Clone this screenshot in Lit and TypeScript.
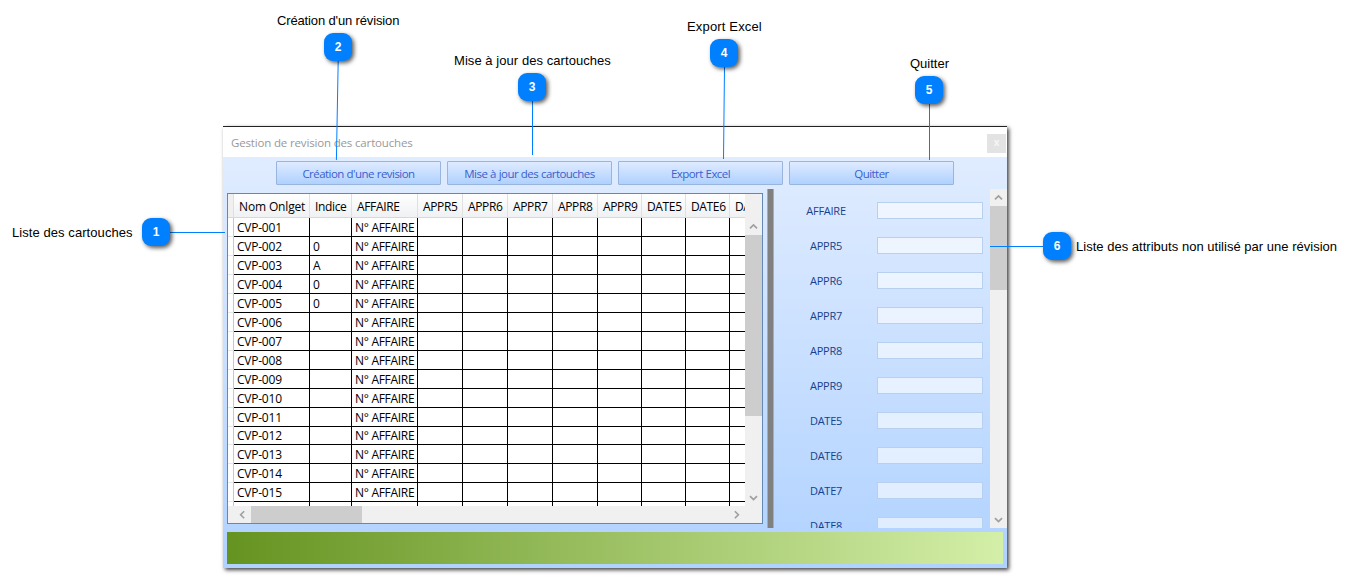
import { LitElement, html, svg, css } from "lit";
import { customElement, property } from "lit/decorators.js";

const COLUMNS = ["Nom Onlget", "Indice", "AFFAIRE", "APPR5", "APPR6", "APPR7", "APPR8", "APPR9", "DATE5", "DATE6", "DATE7"];
const INDICES: Record<number, string> = { 2: "0", 3: "A", 4: "0", 5: "0" };
const ROWS = Array.from({ length: 15 }, (_, i) => ({
  name: "CVP-" + String(i + 1).padStart(3, "0"),
  indice: INDICES[i + 1] ?? "",
}));
const ATTRIBUTES = ["AFFAIRE", "APPR5", "APPR6", "APPR7", "APPR8", "APPR9", "DATE5", "DATE6", "DATE7", "DATE8"];

const CALLOUTS = [
  { n: 1, text: "Liste des cartouches", x: 142, y: 218, tx: 12, ty: 225, ls: 0.07, line: [170, 232.5, 225, 232.5] },
  { n: 2, text: "Création d'un révision", x: 324, y: 33, tx: 277, ty: 13, ls: -0.14, line: [338.2, 61, 336.4, 160] },
  { n: 3, text: "Mise à jour des cartouches", x: 518, y: 73, tx: 454, ty: 53, ls: 0.06, line: [532.5, 101, 532.5, 155] },
  { n: 4, text: "Export Excel", x: 710, y: 39, tx: 687, ty: 19, ls: 0.16, line: [724.5, 67, 723.5, 159] },
  { n: 5, text: "Quitter", x: 915, y: 76, tx: 910, ty: 56, ls: 0, line: [929.5, 104, 929.5, 160] },
  { n: 6, text: "Liste des attributs non utilisé par une révision", x: 1043, y: 232, tx: 1076, ty: 239, ls: 0.02, line: [990, 246.5, 1043, 246.5] },
];

@customElement("scroll-arrow")
export class ScrollArrow extends LitElement {
  @property() dir = "up";
  static styles = css`
    :host { display: block; width: 17px; height: 17px; flex: none; }
    svg { display: block; }
  `;
  render() {
    const turn = { up: 0, right: 90, down: 180, left: 270 }[this.dir] ?? 0;
    return html`<svg width="17" height="17" viewBox="0 0 17 17">
      <path d="M5 10.4 L8.5 6.9 L12 10.4" fill="none" stroke="#a0a0a0" stroke-width="1.7" transform="rotate(${turn} 8.5 8.75)"/>
    </svg>`;
  }
}

@customElement("cartouche-grid")
export class CartoucheGrid extends LitElement {
  static styles = css`
    :host {
      display: grid; box-sizing: border-box; width: 536px; height: 331px;
      grid-template: 24px 288px 17px / 517px 17px;
      border: 1px solid #6289b5; background: #f0f0f0; color: #000;
      font: 12px/18px "Open Sans", "Noto Sans", sans-serif;
    }
    .head, .row { display: grid; grid-template-columns: 6px 76px 42px 66px 45px 45px 45px 45px 44px 44px 44px 44px; white-space: nowrap; }
    .head { overflow: hidden; background: linear-gradient(#fff, #f0f1f3); border-bottom: 1px solid #d8d8d8; height: 23px; }
    .head span { padding: 4px 0 0 5px; border-right: 1px solid #e0e0e0; letter-spacing: -0.35px; }
    .head .first { letter-spacing: -0.15px; }
    .head .corner { padding: 0; background: #f0f0f0; }
    .body { overflow: hidden; background: #fff; }
    .row { height: 19px; }
    .row:nth-child(12) { height: 18px; }
    .row span { border-right: 1px solid #000; border-bottom: 1px solid #000; padding-left: 3px; letter-spacing: -0.23px; line-height: 19px; overflow: hidden; }
    .row:nth-child(12) span { line-height: 18px; }
    .row .affaire { letter-spacing: -0.3px; }
    .row .mark { padding: 0; border-right-color: #c8c8c8; border-bottom-color: #e8e8e8; }
    .v { display: flex; flex-direction: column; justify-content: space-between; }
    .vt { height: 181px; background: #cdcdcd; }
    .h { display: flex; }
    .ht { width: 111px; background: #cdcdcd; margin-right: 366px; }
    .pad { width: 6px; }
  `;
  render() {
    return html`
      <div class="head"><span class="corner"></span>${COLUMNS.map((c, i) => html`<span class=${i ? "" : "first"}>${c}</span>`)}</div>
      <div></div>
      <div class="body">
        ${ROWS.map((r) => html`<div class="row"><span class="mark"></span><span>${r.name}</span><span>${r.indice}</span><span class="affaire">N° AFFAIRE</span>${COLUMNS.slice(3).map(() => html`<span></span>`)}</div>`)}
        <div class="row"><span class="mark"></span>${COLUMNS.map(() => html`<span></span>`)}</div>
      </div>
      <div class="v"><div><scroll-arrow dir="up"></scroll-arrow><div class="vt"></div></div><scroll-arrow dir="down"></scroll-arrow></div>
      <div class="h"><div class="pad"></div><scroll-arrow dir="left"></scroll-arrow><div class="ht"></div><scroll-arrow dir="right"></scroll-arrow></div>
    `;
  }
}

@customElement("attribute-panel")
export class AttributePanel extends LitElement {
  static styles = css`
    :host { display: flex; width: 233px; height: 339px; }
    .list { flex: 1; overflow: hidden; padding-top: 13px; box-sizing: border-box; }
    .item { display: flex; height: 35px; font: 11px/17px "Open Sans", "Noto Sans", sans-serif; color: #15428b; letter-spacing: -0.25px; }
    .label { width: 104px; text-align: center; }
    .field { width: 106px; height: 17px; box-sizing: border-box; margin-left: -1px; background: rgba(255, 255, 255, 0.58); border: 1px solid #b8d0f0; }
    .bar { width: 17px; background: #f0f0f0; display: flex; flex-direction: column; }
    .thumb { height: 84px; background: #cdcdcd; margin-bottom: auto; }
  `;
  render() {
    return html`
      <div class="list">${ATTRIBUTES.map((a) => html`<div class="item"><div class="label">${a}</div><div class="field"></div></div>`)}</div>
      <div class="bar"><scroll-arrow dir="up"></scroll-arrow><div class="thumb"></div><scroll-arrow dir="down"></scroll-arrow></div>
    `;
  }
}

@customElement("app-root")
export class AppRoot extends LitElement {
  static styles = css`
    :host { display: block; position: relative; box-sizing: border-box; width: 1353px; height: 577px; overflow: hidden; background: #fff; padding: 126px 0 0 223px; }
    .window { width: 784px; height: 442px; display: flex; flex-direction: column; box-shadow: 2px 2px 4px rgba(0, 0, 0, 0.75); font-family: "Open Sans", "Noto Sans", sans-serif; }
    .title { box-sizing: border-box; height: 31px; border-top: 1px solid #222; background: #fff; display: flex; justify-content: space-between; padding: 7px 1px 0 8px; font-size: 11.5px; line-height: 17px; letter-spacing: -0.16px; color: #999; }
    .close { width: 19px; height: 19px; background: #e3e3e3; color: #f5f5f5; text-align: center; font-size: 10px; font-weight: 700; }
    .client { flex: 1; background: linear-gradient(#e0ecff, #b0d2ff); }
    .tools { display: flex; gap: 6px; padding: 4px 0 4px 53px; }
    .btn { box-sizing: border-box; width: 165px; height: 24px; border: 1px solid #99b5dd; border-radius: 1px; background: linear-gradient(#dfebff, #afd1ff); text-align: center; font-size: 11.5px; line-height: 24px; letter-spacing: -0.54px; word-spacing: 0.3px; color: #3a5fcd; }
    .panes { display: flex; }
    .left { padding: 4px 4px 0; }
    .split { box-sizing: border-box; width: 7px; height: 339px; background: #808080; border: solid #a3acb8; border-width: 0 1px; }
    .green { margin: 4px 4px 0; height: 32px; background: linear-gradient(90deg, #659320, #d4efa8); }
    .lines { position: absolute; left: 0; top: 0; }
    .badge { position: absolute; width: 28px; height: 28px; border-radius: 9px; background: #0080ff; box-shadow: 2px 2px 4px rgba(0, 0, 0, 0.65); color: #fff; font: bold 12px/28px "Liberation Sans", Arial, sans-serif; text-align: center; }
    .note { position: absolute; font: 13px/15px "Liberation Sans", Arial, sans-serif; color: #000; white-space: nowrap; }
  `;
  render() {
    return html`
      <div class="window">
        <div class="title"><span>Gestion de revision des cartouches</span><div class="close">x</div></div>
        <div class="client">
          <div class="tools">${["Création d'une revision", "Mise à jour des cartouches", "Export Excel", "Quitter"].map((t) => html`<div class="btn">${t}</div>`)}</div>
          <div class="panes">
            <div class="left"><cartouche-grid></cartouche-grid></div>
            <div class="split"></div>
            <attribute-panel></attribute-panel>
          </div>
          <div class="green"></div>
        </div>
      </div>
      <svg class="lines" width="1353" height="577">
        ${CALLOUTS.map((c) => svg`<line x1=${c.line[0]} y1=${c.line[1]} x2=${c.line[2]} y2=${c.line[3]} stroke="#0080ff" stroke-width="1"/>`)}
      </svg>
      ${CALLOUTS.map((c) => html`
        <div class="badge" style="left:${c.x}px;top:${c.y}px">${c.n}</div>
        <div class="note" style="left:${c.tx}px;top:${c.ty}px;letter-spacing:${c.ls}px">${c.text}</div>`)}
    `;
  }
}
